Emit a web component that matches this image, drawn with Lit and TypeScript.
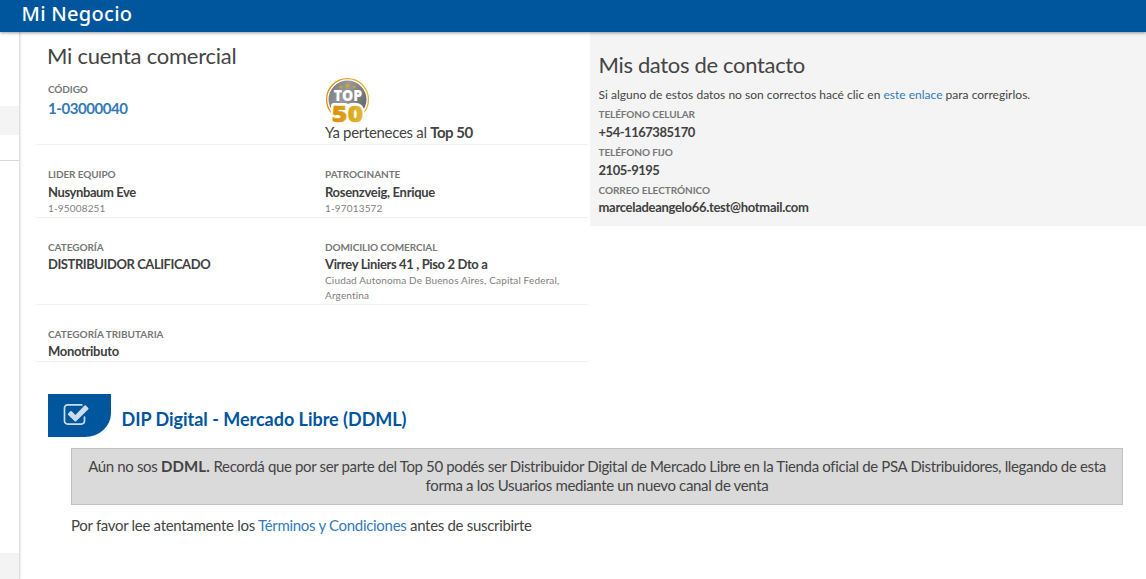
import { LitElement, html, css, svg, nothing } from "lit";
import { customElement, property } from "lit/decorators.js";

@customElement("info-field")
class InfoField extends LitElement {
  @property() label = "";
  @property() value = "";
  @property() detail = "";

  static styles = css`
    :host { display: block; }
    .label { font-size: 10px; line-height: 18px; font-weight: 700; color: #777; text-transform: uppercase; white-space: nowrap; letter-spacing: var(--label-track, -0.06px); }
    .value { font-size: 13px; line-height: var(--value-height, 17px); font-weight: 700; color: #404040; white-space: nowrap; letter-spacing: var(--track, -0.4px); }
    .detail { font-size: 10px; line-height: 15px; color: #808080; letter-spacing: 0.16px; }
  `;

  render() {
    return html`
      <div class="label">${this.label}</div>
      <div class="value">${this.value}</div>
      ${this.detail ? html`<div class="detail">${this.detail}</div>` : nothing}
    `;
  }
}

const STAR = "M0-2.4 .7-.8 2.4-.7 1.1.4 1.5 2.1 0 1.2-1.5 2.1-1.1.4-2.4-.7-.7-.8Z";

const star = (x: number, y: number, s: number) =>
  svg`<path d=${STAR} fill="#dca51c" transform="translate(${x} ${y}) scale(${s})"></path>`;

@customElement("top-badge")
class TopBadge extends LitElement {
  static styles = css`
    :host { display: block; width: 46px; height: 45px; }
    .art { display: block; overflow: visible; }
    .top { font: 800 15px "Open Sans", sans-serif; fill: #fff; }
    .fifty { font: 800 23.5px "Open Sans", sans-serif; fill: url(#gold); stroke: url(#gold); stroke-width: 0.5; }
  `;

  render() {
    return html`<svg class="art" width="46" height="45" viewBox="0 0 46 45">
      <defs>
        <linearGradient id="gold" x1="0" x2="1"><stop offset="0" stop-color="#d98f08"></stop><stop offset="1" stop-color="#e3b82f"></stop></linearGradient>
        <linearGradient id="steel" x1="0" y1="0" x2="1" y2="0.4"><stop offset="0" stop-color="#77787b"></stop><stop offset=".5" stop-color="#98999c"></stop><stop offset="1" stop-color="#6d6e72"></stop></linearGradient>
      </defs>
      <circle cx="22.5" cy="21.6" r="20.9" fill="#fff" stroke="url(#gold)" stroke-width="1.3"></circle>
      <circle cx="22.5" cy="21.6" r="19" fill="url(#steel)"></circle>
      ${star(15.8, 8.8, 0.8)}${star(22.5, 7.6, 1.15)}${star(29.2, 8.8, 0.8)}
      <path d="M9 25H20Q22 25 23 26Q25 24.800 30 24.800Q39.500 25 39.500 35Q39.500 46 30 46H10Q5.500 46 5.500 39L6 28Q6 25 9 25Z" fill="#fff"></path>
      <text class="top" x="8.700" y="22.900" textLength="28.500" lengthAdjust="spacingAndGlyphs">TOP</text>
      <text class="fifty" x="6.800" y="44.400" textLength="31.400" lengthAdjust="spacingAndGlyphs">50</text>
    </svg>`;
  }
}

@customElement("app-root")
class AppRoot extends LitElement {
  static styles = css`
    :host { display: flex; flex-direction: column; height: 579px; overflow: hidden; background: #fff; font-family: Lato, sans-serif; font-size: 15px; color: #444; }
    .bar { flex: none; height: 32px; z-index: 1; box-sizing: border-box; padding-left: 21.5px; background: #00569d; color: #fff; font: 500 20px/28px "Noto Sans", sans-serif; letter-spacing: 0.28px; box-shadow: 0 1px 3px rgba(0, 0, 0, 0.4); }
    .body { flex: 1; display: flex; min-height: 0; }
    .side { flex: none; width: 19px; border-right: 1px solid #ddd; box-shadow: 1px 0 2px rgba(0, 0, 0, 0.08); display: flex; flex-direction: column; }
    .current { margin-top: 74px; height: 29px; background: #f4f4f4; }
    .rule { margin-top: 25px; height: 1px; background: #d8d8d8; }
    .foot { margin-top: auto; height: 26px; background: #f3f3f3; }
    .main { flex: 1; min-width: 0; }
    .top-area { display: flex; align-items: flex-start; }
    .account { width: 554px; margin-left: 15px; flex: none; }
    h1, h2 { margin: 0; font-weight: 400; font-size: 22px; color: #444; white-space: nowrap; letter-spacing: -0.25px; }
    h1 { padding-left: 12px; line-height: 48px; height: 40px; }
    .row { display: grid; grid-template-columns: 277px 252px; padding: 20px 12px 0 13px; box-sizing: border-box; border-bottom: 1px solid #f0f0f0; border-radius: 3px; }
    .first { height: 73px; padding-top: 6px; align-items: start; }
    .second { height: 73px; --value-height: 18px; }
    .third { height: 87px; }
    .fourth { height: 57px; }
    .leader { --track: -0.41px; --label-track: -0.1px; }
    .sponsor { --track: -0.31px; }
    .category { --track: -0.44px; }
    .address { --track: -0.37px; --label-track: -0.1px; }
    .tax { --track: -0.3px; --label-track: -0.02px; }
    .phone { --track: -0.47px; --label-track: -0.1px; }
    .mail { --track: -0.3px; --label-track: -0.04px; }
    .code-label { margin-top: 3px; font-size: 10px; line-height: 17px; font-weight: 700; color: #777; letter-spacing: -0.1px; }
    .code { font-size: 15px; line-height: 21px; font-weight: 700; color: #337ab7; letter-spacing: -0.45px; }
    .member { line-height: 19px; letter-spacing: -0.31px; }
    b { font-weight: 700; letter-spacing: -0.47px; }
    .contact { flex: 1; height: 194px; margin-left: 1px; box-sizing: border-box; padding: 19px 0 0 8.5px; background: #f4f4f4; }
    h2 { line-height: 28px; letter-spacing: -0.33px; }
    .note { font-size: 12px; line-height: 18px; margin: 7px 0 1px; letter-spacing: 0.01px; }
    a { color: #337ab7; text-decoration: none; }
    .contact-field { margin-bottom: 2px; --value-height: 18px; }
    .mail { --value-height: 16px; }
    .program { padding: 32px 23px 0 28px; }
    .heading { display: flex; align-items: flex-start; gap: 10.5px; height: 43px; }
    .tab { width: 63px; height: 43px; border-bottom-right-radius: 26px 24px; background: #00569d; }
    .check { display: block; margin: 9px 0 0 15px; }
    h3 { margin: 0; font-size: 18px; line-height: 50px; font-weight: 700; letter-spacing: -0.02px; color: #00569d; }
    .notice { margin: 11px 0 0 23px; height: 57px; box-sizing: border-box; border: 1px solid #c2c2c2; background: #dadada; padding: 8px 15px; text-align: center; line-height: 19px; letter-spacing: -0.35px; }
    .notice-name { letter-spacing: 0.15px; }
    .terms { margin: 10px 0 0 23px; line-height: 20px; letter-spacing: -0.305px; }
  `;

  render() {
    return html`
      <header class="bar">Mi Negocio</header>
      <div class="body">
        <aside class="side">
          <div class="current"></div>
          <div class="rule"></div>
          <div class="foot"></div>
        </aside>
        <main class="main">
          <div class="top-area">
            <section class="account">
              <h1>Mi cuenta comercial</h1>
              <div class="row first">
                <div>
                  <div class="code-label">CÓDIGO</div>
                  <div class="code">1-03000040</div>
                </div>
                <div>
                  <top-badge></top-badge>
                  <div class="member">Ya perteneces al <b>Top 50</b></div>
                </div>
              </div>
              <div class="row second">
                <info-field class="leader" label="Lider equipo" value="Nusynbaum Eve" detail="1-95008251"></info-field>
                <info-field class="sponsor" label="Patrocinante" value="Rosenzveig, Enrique" detail="1-97013572"></info-field>
              </div>
              <div class="row third">
                <info-field class="category" label="Categoría" value="DISTRIBUIDOR CALIFICADO"></info-field>
                <info-field class="address" label="Domicilio comercial" value="Virrey Liniers 41 , Piso 2 Dto a" detail="Ciudad Autonoma De Buenos Aires, Capital Federal, Argentina"></info-field>
              </div>
              <div class="row fourth">
                <info-field class="tax" label="Categoría tributaria" value="Monotributo"></info-field>
              </div>
            </section>
            <section class="contact">
              <h2>Mis datos de contacto</h2>
              <div class="note">Si alguno de estos datos no son correctos hacé clic en <a>este enlace</a> para corregirlos.</div>
              <info-field class="contact-field phone" label="Teléfono celular" value="+54-1167385170"></info-field>
              <info-field class="contact-field phone" label="Teléfono fijo" value="2105-9195"></info-field>
              <info-field class="contact-field mail" label="Correo electrónico" value="marceladeangelo66.test@hotmail.com"></info-field>
            </section>
          </div>
          <section class="program">
            <div class="heading">
              <div class="tab">
                <svg class="check" width="26" height="23" viewBox="0 0 26 23">
                  <path d="M18.8 1.900H4.500A3 3 0 0 0 1.500 4.900V18.100A3 3 0 0 0 4.500 21.100H18.500A3 3 0 0 0 21.500 18.100V14" fill="none" stroke="#ccddec" stroke-width="1.700" stroke-linecap="round"></path>
                  <path d="M5.200 10.600 7.300 8.300Q8 7.600 8.700 8.300L12.400 12 21.500 2.600Q22.200 1.900 22.900 2.600L25.300 4.900Q26 5.600 25.300 6.300L13.100 18.300Q12.400 19 11.700 18.300L5.200 12Q4.500 11.300 5.200 10.600Z" fill="#ccddec"></path>
                </svg>
              </div>
              <h3>DIP Digital - Mercado Libre (DDML)</h3>
            </div>
            <div class="notice">Aún no sos <b class="notice-name">DDML.</b> Recordá que por ser parte del Top 50 podés ser Distribuidor Digital de Mercado Libre en la Tienda oficial de PSA Distribuidores, llegando de esta forma a los Usuarios mediante un nuevo canal de venta</div>
            <div class="terms">Por favor lee atentamente los <a>Términos y Condiciones</a> antes de suscribirte</div>
          </section>
        </main>
      </div>
    `;
  }
}
